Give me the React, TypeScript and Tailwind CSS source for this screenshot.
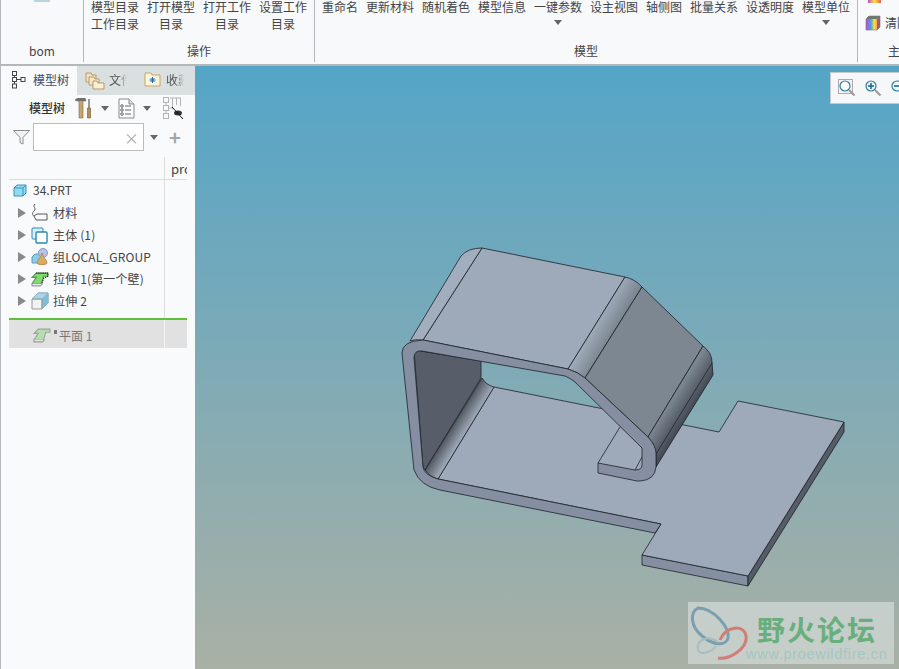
import React from "react";

const OPERATE = [
  ["模型目录", "工作目录"],
  ["打开模型", "目录"],
  ["打开工作", "目录"],
  ["设置工作", "目录"],
];

const MODEL = [
  { name: "重命名" },
  { name: "更新材料" },
  { name: "随机着色" },
  { name: "模型信息" },
  { name: "一键参数", caret: true },
  { name: "设主视图" },
  { name: "轴侧图" },
  { name: "批量关系" },
  { name: "设透明度" },
  { name: "模型单位", caret: true },
];

const Caret = ({ className = "" }: { className?: string }) => (
  <svg width="8" height="5" viewBox="0 0 8 5" className={`shrink-0 ${className}`}>
    <path d="M0 0H8L4 5Z" fill="#666" />
  </svg>
);

const Arrow = () => (
  <svg width="8" height="10" viewBox="0 0 8 10" className="shrink-0">
    <path d="M0 0L8 5L0 10Z" fill="#8a8a8a" />
  </svg>
);

const RootIcon = () => (
  <svg width="14" height="13" viewBox="0 0 14 13" className="shrink-0">
    <path d="M1 4L4 1H13V9L10 12H1Z" fill="#8fdcf2" stroke="#3f93b8" />
    <path d="M1 4H10V12M10 4L13 1" fill="none" stroke="#3f93b8" />
  </svg>
);

const MaterialIcon = () => (
  <svg width="17" height="20" viewBox="0 0 17 20">
    <path d="M4 1C1 4 6 5 3 8C1 10 1 12 3 13L5 17H16V11H6L3 13" fill="none" stroke="#555" />
  </svg>
);

const BodyIcon = () => (
  <svg width="17" height="17" viewBox="0 0 17 17">
    <rect x="1" y="1" width="11" height="11" rx="1" fill="#d6f1fa" stroke="#2b87ad" />
    <rect x="5" y="5" width="11" height="11" rx="1" fill="#fff" stroke="#2b87ad" strokeWidth="1.4" />
  </svg>
);

const GroupIcon = () => (
  <svg width="18" height="18" viewBox="0 0 18 18">
    <path d="M1 9L4 6H10V15H1Z" fill="#8fcbe4" stroke="#5d9fc0" />
    <circle cx="12" cy="5" r="4.5" fill="#b9c2e6" stroke="#8b96c4" />
    <path d="M11 5C10 10 6 12 6 15C6 17 16 17 16 15C16 12 12 10 11 5Z" fill="#d9ac66" stroke="#b98a45" />
  </svg>
);

const ExtrudeIcon = ({ muted = false }: { muted?: boolean }) => (
  <svg width="18" height="15" viewBox="0 0 17 14" className="shrink-0">
    <path d="M1 11H10L12 4H16V1H5L1 5H5Z" fill={muted ? "#b7dcb0" : "#7fdb6f"} stroke={muted ? "#9aa59a" : "#5a8f52"} />
    <path d="M1 11V13H9L11 11" fill="#e8e8e8" stroke="#9a9a9a" />
    {!muted && <path d="M5 1H16V4L12 6L10 11" fill="none" stroke="#111" strokeDasharray="1 1" />}
  </svg>
);

const BlockIcon = () => (
  <svg width="18" height="18" viewBox="0 0 18 18">
    <path d="M1 7L7 1H17V11L11 17H1Z" fill="#f2f2f2" stroke="#9a9a9a" />
    <path d="M1 7L7 1H17L11 7Z" fill="#a8d7ec" stroke="#8bb5c9" />
    <path d="M11 7L17 1V11L11 17Z" fill="#7ebedd" stroke="#8bb5c9" />
    <path d="M1 7H11V17" fill="none" stroke="#9a9a9a" />
  </svg>
);

const TREE = [
  { label: "材料", icon: <MaterialIcon /> },
  { label: "主体 (1)", icon: <BodyIcon /> },
  { label: "组LOCAL_GROUP", icon: <GroupIcon /> },
  { label: "拉伸 1(第一个壁)", icon: <ExtrudeIcon /> },
  { label: "拉伸 2", icon: <BlockIcon /> },
];

const FolderIcon = () => (
  <svg width="20" height="20" viewBox="0 0 20 20" className="shrink-0">
    <path d="M1 3H6L7 5H11V12H1Z" fill="#f3e2bd" stroke="#b69a68" />
    <path d="M4 7H9L10 9H14V15H4Z" fill="#f6e8c8" stroke="#b69a68" />
    <path d="M8 11H12L13 13H19V19H8Z" fill="#fbf0d6" stroke="#b69a68" />
  </svg>
);

const FavoriteIcon = () => (
  <svg width="17" height="15" viewBox="0 0 17 15" className="shrink-0">
    <path d="M1 1H7L8 3H16V14H1Z" fill="#fdf4dc" stroke="#c8a566" />
    <path d="M8.500 5V11M5.500 8H11.500M6.500 6L10.500 10M10.500 6L6.500 10" stroke="#1d6fa8" />
  </svg>
);

const ToolIcon = () => (
  <svg width="17" height="21" viewBox="0 0 17 21" className="shrink-0">
    <path d="M0 2L3 0H10L11 3H8V20H4V3H2Z" fill="#c9a468" stroke="#7a6a4e" strokeWidth=".6" />
    <path d="M0 2L3 0H10L11 3H2Z" fill="#707070" />
    <path d="M14 1V10" stroke="#777" strokeWidth="1.500" />
    <path d="M12.500 10H15.500V20H12.500Z" fill="#b98c4a" stroke="#6b5a3c" strokeWidth=".6" />
  </svg>
);

const ListIcon = () => (
  <svg width="17" height="21" viewBox="0 0 17 21" className="block shrink-0">
    <path d="M1 1H11L16 6V20H1Z" fill="#fbfbfb" stroke="#8a8a8a" />
    <path d="M11 1V6H16" fill="#ddd" stroke="#8a8a8a" />
    <path d="M7 8H13M7 12H13M7 16H13" stroke="#666" />
    <circle cx="4" cy="8" r="1.300" fill="none" stroke="#666" />
    <circle cx="4" cy="12" r="1.300" fill="none" stroke="#666" />
    <circle cx="4" cy="16" r="1.300" fill="none" stroke="#666" />
  </svg>
);

const TreeEyeIcon = () => (
  <svg width="21" height="23" viewBox="0 0 21 23" className="block shrink-0">
    <g fill="none" stroke="#b4b4b4">
      <rect x=".5" y=".5" width="5" height="5" />
      <rect x=".5" y="8.500" width="5" height="5" />
      <rect x=".5" y="16.500" width="5" height="5" />
      <path d="M7 1H18M9.500 1V11M13.500 1V8M17.500 1V9M3 6V8M3 14V16M6 11H10" />
    </g>
    <ellipse cx="15" cy="16" rx="4" ry="2.500" fill="#333" />
    <path d="M9 10L20 22" stroke="#111" strokeWidth="1" />
  </svg>
);

const Funnel = () => (
  <svg width="17" height="15" viewBox="0 0 17 15" className="shrink-0">
    <path d="M.500.500H16.500L10 7.500V14L7 12.500V7.500Z" fill="#f2f2f2" stroke="#8d8d8d" />
  </svg>
);

const Magnifier = ({ sign }: { sign: "fit" | "plus" | "minus" }) => (
  <svg width="18" height="18" viewBox="0 0 18 18" className="shrink-0">
    {sign === "fit" && <rect x=".5" y=".5" width="14" height="14" fill="#f4f4f4" stroke="#aaa" />}
    <circle cx="7" cy="7" r="5" fill={sign === "fit" ? "#fff" : "#eef6fa"} stroke="#2f7f9f" strokeWidth="1.200" />
    <path d="M11 11L16.500 16.500" stroke="#999" strokeWidth="2" />
    {sign !== "fit" && <path d="M4 7H10" stroke="#1c6f92" strokeWidth="1.600" />}
    {sign === "plus" && <path d="M7 4V10" stroke="#1c6f92" strokeWidth="1.600" />}
  </svg>
);

const ColorBox = () => (
  <svg width="16" height="16" viewBox="0 0 16 16" className="shrink-0">
    <defs>
      <linearGradient id="rainbow" x1="0" x2="1">
        <stop offset="0" stopColor="#c04bd0" />
        <stop offset=".35" stopColor="#4aa0e8" />
        <stop offset=".6" stopColor="#ffe040" />
        <stop offset="1" stopColor="#e85a5a" />
      </linearGradient>
    </defs>
    <path d="M1 4L4 1H15V12L12 15H1Z" fill="url(#rainbow)" stroke="#777" strokeWidth=".6" />
    <path d="M1 4L4 1H15L12 4Z" fill="#6b7a6b" />
    <path d="M12 4L15 1V12L12 15Z" fill="#a05a78" />
  </svg>
);

const Part = () => (
  <svg width="704" height="603" viewBox="195 66 704 603" className="block">
    <defs>
      <linearGradient id="floorBend" gradientUnits="userSpaceOnUse" x1="425" y1="470" x2="438" y2="478">
        <stop offset="0" stopColor="#50565f" />
        <stop offset="1" stopColor="#a0abbb" />
      </linearGradient>
      <linearGradient id="topBend" gradientUnits="userSpaceOnUse" x1="568" y1="369" x2="585" y2="379">
        <stop offset="0" stopColor="#a2adbd" />
        <stop offset="1" stopColor="#7c8791" />
      </linearGradient>
      <linearGradient id="sideBend" gradientUnits="userSpaceOnUse" x1="648" y1="437" x2="667" y2="449">
        <stop offset="0" stopColor="#7c8791" />
        <stop offset="1" stopColor="#434954" />
      </linearGradient>
    </defs>
    <g stroke="#1d2228" strokeWidth=".8" strokeLinejoin="round">
      <path d="M642 555L748 576V586L642 565Z" fill="#868fa2" />
      <path d="M748 576L844 422V432L748 586Z" fill="#555c68" />
      <path d="M494 387L719 432L738 401L844 422L748 576L642 555L661 524L438 479Z" fill="#9eaaba" />
      <path d="M620 427L598 463M642 457L635 470" fill="none" />
      <path d="M414 350L481 361V378L425 470L423 467Z" fill="#575e69" />
      <path d="M482 378Q486 385 494 387L438 479Q430 477 425 470Z" fill="url(#floorBend)" />
      <path d="M423 340L482 248L625 277L568 369Z" fill="#9eaaba" />
      <path d="M410 341L461 256Q468 248 482 248L423 340Q415 339 410 341Z" fill="#a2adbd" />
      <path d="M568 369L625 277Q635 279 642 287L585 378Q578 372 568 369Z" fill="url(#topBend)" />
      <path d="M642 287L703 346L648 437L585 378Z" fill="#7c8791" />
      <path d="M703 346Q712 353 712 362L713 375L656 467V453Q654 444 648 437Z" fill="url(#sideBend)" />
      <path d="M712 363L656 454" fill="none" />
      <path
        d="M423 340L568 369Q578 372 585 378L648 437Q656 446 656 453V467Q655 480 640 481H637L598 473V463L635 470Q642 470 642 465V448L575 382Q570 378 565 376L422 351Q414 350 414 358L423 467Q424 475 438 479L661 524L655 533L440 490Q420 486 414 470L402 353Q402 341 423 340Z"
        fill="#868fa2"
      />
    </g>
  </svg>
);

export default function App() {
  return (
    <div
      className="w-[899px] h-[669px] flex flex-col overflow-hidden bg-white text-[12px] text-[#444]"
      style={{ fontFamily: '"Noto Sans CJK SC", "Noto Sans", sans-serif' }}
    >
      <div className="h-[66px] shrink-0 flex overflow-hidden bg-[#f8f9fb] border-l border-b-2 border-[#b4b8ba]">
        <div className="w-[83px] h-[62px] shrink-0 flex flex-col items-center justify-between border-r border-[#b4b8ba]">
          <div className="w-[16px] h-[2px] bg-[#b9d3e2]" />
          <span className="pb-[3px] leading-[17px]">bom</span>
        </div>

        <div className="w-[231px] h-[62px] shrink-0 flex flex-col items-center justify-between border-r border-[#b4b8ba]">
          <div className="flex gap-2 -mt-[2px]">
            {OPERATE.map((item, index) => {
              return (
                <div key={index} className="w-12 flex flex-col items-center leading-[17px]">
                  <span>{item[0]}</span>
                  <span>{item[1]}</span>
                </div>
              );
            })}
          </div>
          <span className="pb-[3px] leading-[17px]">操作</span>
        </div>

        <div className="w-[543px] h-[62px] shrink-0 flex flex-col items-center justify-between border-r border-[#b4b8ba]">
          <div className="flex gap-2 -mt-[2px]">
            {MODEL.map((item, index) => {
              return (
                <div key={index} className="flex flex-col items-center leading-[17px]">
                  <span>{item.name}</span>
                  {item.caret && <Caret className="mt-[5px]" />}
                </div>
              );
            })}
          </div>
          <span className="pb-[3px] leading-[17px]">模型</span>
        </div>

        <div className="flex-1 h-[62px] flex flex-col pl-[7px] overflow-hidden">
          <div className="ml-[3px] w-[13px] h-[3px] shrink-0 bg-[linear-gradient(90deg,#c04bd0,#ffe040,#e85a5a)]" />
          <div className="flex items-center gap-1 mt-[11px] whitespace-nowrap">
            <ColorBox />
            <span>清除</span>
          </div>
          <span className="mt-[10px] pl-[23px] leading-[17px]">主</span>
        </div>
      </div>

      <div className="flex-1 flex min-h-0">
        <div className="w-[195px] shrink-0 flex flex-col border-l border-[#b4b8ba] bg-[#f9fafc]">
          <div className="h-[29px] shrink-0 flex bg-[#dadfdf]">
            <div className="w-[76px] flex items-center gap-[7px] pl-[11px] pb-[2px] bg-[#f9fafc]">
              <svg width="14" height="18" viewBox="0 0 14 18" fill="none" stroke="#444" className="shrink-0">
                <rect x=".5" y=".5" width="4" height="4" />
                <rect x=".5" y="6.500" width="4" height="4" />
                <rect x=".5" y="13" width="4" height="4" />
                <rect x="9" y="6.500" width="4" height="4" />
                <path d="M2.500 4.500V6.500M2.500 10.500V13M4.500 8.500H9" />
              </svg>
              <span className="text-[#3f4a66]">模型树</span>
            </div>
            <div className="w-[66px] flex items-center gap-[4px] pl-[8px] pb-[2px] overflow-hidden">
              <FolderIcon />
              <span className="w-[18px] overflow-hidden text-[#555] whitespace-nowrap [mask-image:linear-gradient(90deg,#000_55%,transparent)]">
                文件
              </span>
            </div>
            <div className="flex-1 flex items-center gap-[5px] pl-[1px] pb-[2px] overflow-hidden">
              <FavoriteIcon />
              <span className="w-[18px] overflow-hidden text-[#555] whitespace-nowrap [mask-image:linear-gradient(90deg,#000_55%,transparent)]">
                收藏
              </span>
            </div>
          </div>

          <div className="h-[27px] shrink-0 flex items-center pl-[28px]">
            <span className="font-medium w-[46px] pb-[2px] text-[#333]">模型树</span>
            <ToolIcon />
            <Caret className="ml-[9px]" />
            <span className="ml-[9px] shrink-0">
              <ListIcon />
            </span>
            <Caret className="ml-[8px]" />
            <span className="ml-[12px] shrink-0">
              <TreeEyeIcon />
            </span>
          </div>

          <div className="h-[30px] shrink-0 flex items-center pl-[12px]">
            <Funnel />
            <div className="ml-[3px] w-[111px] h-[28px] flex items-center justify-end pr-[4px] bg-white border border-[#bcbcbc]">
              <span className="text-[15px] leading-none text-[#aaa]">×</span>
            </div>
            <Caret className="ml-[6px]" />
            <span className="ml-[11px] text-[20px] font-bold leading-none text-[#a5a5a5]">+</span>
          </div>

          <div className="mt-[5px] w-[178px] ml-[8px] flex flex-col">
            <div className="h-[23px] flex border-b border-[#dcdcdc]">
              <div className="w-[155px]" />
              <div className="flex-1 border-l border-[#dcdcdc] pl-[6px] overflow-hidden leading-[24px] text-[13px]">
                pro
              </div>
            </div>

            <div className="flex">
              <div className="w-[155px] h-[138px] flex flex-col">
                <div className="h-[22px] flex items-center gap-[6px] pl-[4px] pb-[2px]">
                  <RootIcon />
                  <span>34.PRT</span>
                </div>
                {TREE.map((item, index) => {
                  return (
                    <div key={index} className="h-[22px] flex items-center pl-[9px]">
                      <Arrow />
                      <span className="w-[22px] ml-[5px] flex justify-start shrink-0">{item.icon}</span>
                      <span className="whitespace-nowrap tracking-[.15px]">{item.label}</span>
                    </div>
                  );
                })}
              </div>
              <div className="flex-1 border-l border-[#dcdcdc]" />
            </div>

            <div className="h-[30px] flex border-t-2 border-[#5fc03c] bg-[#e1e1e1]">
              <div className="w-[155px] flex items-center pl-[24px] pt-[3px] text-[#777]">
                <ExtrudeIcon muted />
                <span className="ml-[3px] mb-[7px] w-[3px] h-[4px] bg-[#777]" />
                <span className="ml-[2px]">平面 1</span>
              </div>
              <div className="flex-1 border-l border-[#f3f3f3]" />
            </div>
          </div>
        </div>

        <div className="relative flex-1 overflow-hidden bg-[linear-gradient(180deg,#54a5c8_0%,#a9b0a5_100%)]">
          <Part />

          <div className="absolute top-[6px] left-[635px] w-[80px] h-[32px] flex items-center gap-[8px] pl-[7px] bg-[#f6f7f8] border border-[#c4c8ca]">
            <Magnifier sign="fit" />
            <Magnifier sign="plus" />
            <Magnifier sign="minus" />
          </div>

          <div className="absolute top-[536px] left-[493px] w-[206px] h-[62px] bg-[#d4dcd8]/70 flex">
            <svg width="60" height="60" viewBox="0 0 60 60" className="shrink-0" fill="none">
              <path d="M10 6C2 10 2 24 14 34C26 44 38 44 40 36C42 26 26 6 10 6Z" stroke="#7c9fb0" strokeWidth="3" />
              <path d="M32 38C38 24 56 22 58 34C60 46 42 58 30 56" stroke="#cf7f78" strokeWidth="3" />
              <path d="M30 40C20 32 8 38 10 48C12 54 24 50 28 44" stroke="#a9bcc0" strokeWidth="2" />
            </svg>
            <div className="flex flex-col pl-[9px] pt-[12px]">
              <span className="text-[28px] leading-[30px] font-bold tracking-[2px] text-[#69ae7d] whitespace-nowrap">
                野火论坛
              </span>
              <span
                className="mt-[3px] text-[14.500px] leading-[15px] tracking-[.7px] text-[#a3c6c1] -ml-[11px] whitespace-nowrap"
                style={{ fontFamily: '"Liberation Sans", sans-serif' }}
              >
                www.proewildfire.cn
              </span>
            </div>
          </div>
        </div>
      </div>
    </div>
  );
}
